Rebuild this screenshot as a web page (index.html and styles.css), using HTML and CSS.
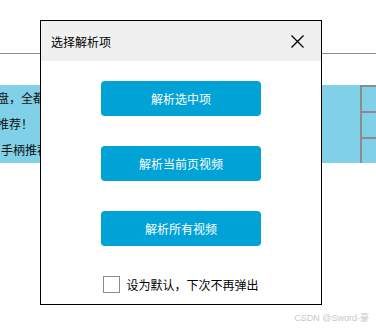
FILE: index.html
```html
<!DOCTYPE html>
<html lang="zh-CN">
<head>
<meta charset="UTF-8">
<meta name="viewport" content="width=device-width, initial-scale=1.0">
<title>选择解析项</title>
<link rel="stylesheet" href="styles.css">
</head>
<body>

<div class="page">
  <div class="topbar"></div>
  <div class="band">
    <div class="band-text">
      <div class="row row-1">键盘，全都有推荐</div>
      <div class="row row-2">推荐！</div>
      <div class="row row-3">手柄推荐</div>
    </div>
    <div class="band-cells">
      <div class="cell"></div>
      <div class="cell"></div>
      <div class="cell"></div>
    </div>
  </div>
</div>

<div class="dialog">
  <div class="dialog-header">
    <span class="dialog-title">选择解析项</span>
    <button class="close-btn" type="button" aria-label="关闭">
      <svg width="13" height="13" viewBox="0 0 13 13">
        <path d="M0.5 0.5 L12.5 12.5 M12.5 0.5 L0.5 12.5" stroke="#000" stroke-width="1.3" fill="none"/>
      </svg>
    </button>
  </div>
  <div class="dialog-body">
    <button class="parse-btn" type="button">解析选中项</button>
    <button class="parse-btn" type="button">解析当前页视频</button>
    <button class="parse-btn" type="button">解析所有视频</button>
    <label class="remember">
      <span class="check-box"></span>
      <span>设为默认，下次不再弹出</span>
    </label>
  </div>
</div>

<div class="watermark">CSDN @Sword-豪</div>

</body>
</html>
```

FILE: styles.css
```css
body {
  margin: 0;
  background: #fff;
  font-family: "Noto Sans CJK SC", "Noto Sans", sans-serif;
  font-size: 12px;
  color: #000;
  width: 376px;
  height: 330px;
  overflow: hidden;
  position: relative;
}
.page {
  width: 376px;
}
.topbar {
  height: 53px;
  border-bottom: 1px solid #8a8a8a;
}
.band {
  margin-top: 31px;
  height: 78px;
  background: #80d0e8;
  display: flex;
  justify-content: space-between;
}
.band-text {
  width: 40px;
  overflow: hidden;
  white-space: nowrap;
}
.row {
  height: 26px;
  line-height: 26px;
  font-size: 12px;
  color: #111;
}
.row-1 {
  margin-left: -15px;
}
.row-2 {
  margin-left: -3px;
}
.row-3 {
  margin-left: 1px;
}
.band-cells {
  width: 16px;
  display: flex;
  flex-direction: column;
}
.cell {
  flex: 1;
  border: 2px solid #8c8c8c;
  border-right: none;
  border-bottom: none;
}
.dialog {
  position: absolute;
  left: 40px;
  top: 20px;
  width: 280px;
  height: 283px;
  border: 1px solid #000;
  background: #fff;
}
.dialog-header {
  height: 40px;
  background: #f0f0f0;
  display: flex;
  align-items: center;
  justify-content: space-between;
  padding: 0 17px 0 10px;
}
.dialog-title {
  font-size: 12px;
  line-height: 1;
  padding-top: 1px;
}
.close-btn {
  border: none;
  background: none;
  padding: 0;
  width: 13px;
  height: 13px;
  display: block;
}
.close-btn svg {
  display: block;
}
.dialog-body {
  display: flex;
  flex-direction: column;
  align-items: center;
  padding-top: 20px;
}
.parse-btn {
  width: 160px;
  height: 35px;
  margin-bottom: 30px;
  border: none;
  border-radius: 4px;
  background: #01a3d7;
  color: #fff;
  font-family: "Noto Sans CJK SC", "Noto Sans", sans-serif;
  font-size: 12px;
}
.remember {
  display: flex;
  align-items: center;
  gap: 6px;
  font-size: 12px;
}
.check-box {
  width: 17px;
  height: 17px;
  border: 1px solid #8a8a8a;
  box-sizing: border-box;
}
.watermark {
  position: absolute;
  right: 7px;
  top: 311px;
  font-family: "Liberation Sans", "Noto Sans CJK SC", sans-serif;
  font-size: 9px;
  color: #c8c8c8;
}
```
